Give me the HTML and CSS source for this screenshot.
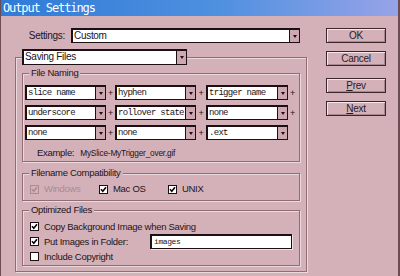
FILE: index.html
```html
<!DOCTYPE html>
<html lang="en">
<head>
  <meta charset="UTF-8">
  <title>Output Settings</title>
  <link rel="stylesheet" href="styles.css">
</head>
<body>
  <div class="window">
    <div class="titlebar">Output Settings</div>
    <div class="content">
      <div class="main">
        <div class="settings-row">
          <label>Settings:</label>
          <div class="select wide"><span class="val">Custom</span><span class="arrow"></span></div>
        </div>

        <fieldset class="panel">
          <legend><div class="select saving"><span class="val">Saving Files</span><span class="arrow"></span></div></legend>

          <fieldset class="group naming">
            <legend>File Naming</legend>
            <div class="name-grid">
              <div class="select mono"><span class="val">slice name</span><span class="arrow"></span></div>
              <span class="plus">+</span>
              <div class="select mono"><span class="val">hyphen</span><span class="arrow"></span></div>
              <span class="plus">+</span>
              <div class="select mono"><span class="val">trigger name</span><span class="arrow"></span></div>
              <span class="plus">+</span>

              <div class="select mono"><span class="val">underscore</span><span class="arrow"></span></div>
              <span class="plus">+</span>
              <div class="select mono"><span class="val">rollover state</span><span class="arrow"></span></div>
              <span class="plus">+</span>
              <div class="select mono"><span class="val">none</span><span class="arrow"></span></div>
              <span class="plus">+</span>

              <div class="select mono"><span class="val">none</span><span class="arrow"></span></div>
              <span class="plus">+</span>
              <div class="select mono"><span class="val">none</span><span class="arrow"></span></div>
              <span class="plus">+</span>
              <div class="select mono"><span class="val">.ext</span><span class="arrow"></span></div>
              <span></span>
            </div>
            <div class="example">
              <span>Example:</span>
              <span class="example-file">MySlice-MyTrigger_over.gif</span>
            </div>
          </fieldset>

          <fieldset class="group compat">
            <legend>Filename Compatibility</legend>
            <div class="checks">
              <div class="check disabled">
                <span class="cb"><svg viewBox="0 0 7 7"><path d="M1 3.2 L2.8 5.2 L6 1.2" /></svg></span>Windows
              </div>
              <div class="check">
                <span class="cb"><svg viewBox="0 0 7 7"><path d="M1 3.2 L2.8 5.2 L6 1.2" /></svg></span>Mac OS
              </div>
              <div class="check">
                <span class="cb"><svg viewBox="0 0 7 7"><path d="M1 3.2 L2.8 5.2 L6 1.2" /></svg></span>UNIX
              </div>
            </div>
          </fieldset>

          <fieldset class="group optimized">
            <legend>Optimized Files</legend>
            <div class="opt-row">
              <span class="cb"><svg viewBox="0 0 7 7"><path d="M1 3.2 L2.8 5.2 L6 1.2" /></svg></span>Copy Background Image when Saving
            </div>
            <div class="opt-row">
              <span class="cb"><svg viewBox="0 0 7 7"><path d="M1 3.2 L2.8 5.2 L6 1.2" /></svg></span>Put Images in Folder:
              <div class="textbox">images</div>
            </div>
            <div class="opt-row">
              <span class="cb"></span>Include Copyright
            </div>
          </fieldset>
        </fieldset>
      </div>

      <div class="buttons">
        <button class="btn">OK</button>
        <button class="btn cancel">Cancel</button>
        <button class="btn prev"><u>P</u>rev</button>
        <button class="btn next"><u>N</u>ext</button>
      </div>
    </div>
  </div>
</body>
</html>
```

FILE: styles.css
```css
* {
  box-sizing: border-box;
}

body {
  margin: 0;
  font-family: "Liberation Sans", Arial, sans-serif;
  font-size: 9.5px;
  letter-spacing: -0.3px;
  color: #231418;
}

.window {
  width: 400px;
  height: 276px;
  background: #d4b1b9;
  border-left: 1px solid #6b4c54;
  border-right: 2px solid #6b4c54;
  overflow: hidden;
}

.titlebar {
  height: 16px;
  background: linear-gradient(90deg, #2f7bd7, #4f90df 55%, #97a3e8);
  color: white;
  font-family: "DejaVu Sans Mono", monospace;
  font-size: 12px;
  letter-spacing: -1.1px;
  line-height: 16px;
  padding-left: 2px;
}

.content {
  display: flex;
}

.main {
  width: 292px;
  margin-left: 14px;
}

/* settings row */
.settings-row {
  margin-top: 12px;
  padding-right: 7px;
  display: flex;
  align-items: center;
  justify-content: flex-end;
  gap: 6px;
  font-size: 10px;
}

/* fake dropdowns */
.select {
  display: flex;
  height: 15px;
  background: white;
  border: 1px solid #1d1014;
  border-top-width: 2px;
  border-left-width: 2px;
}

.select .val {
  flex: 1;
  padding-left: 1px;
  line-height: 12px;
  white-space: nowrap;
  overflow: hidden;
}

.select .arrow {
  width: 10px;
  background: #cda8b1;
  border-left: 1px solid #1d1014;
  display: flex;
  align-items: center;
  justify-content: center;
}

.select .arrow::after {
  content: "";
  border-left: 2px solid transparent;
  border-right: 2px solid transparent;
  border-top: 3px solid #1d1014;
}

.select.wide {
  width: 229px;
}

.select.saving {
  width: 165px;
  height: 16px;
  font-size: 10px;
}

.select.mono .val {
  font-family: "Liberation Mono", monospace;
  font-size: 9px;
  letter-spacing: -0.7px;
}

/* group boxes */
fieldset {
  margin: 0;
  min-inline-size: 0;
  border: 1px solid #8e6d75;
  box-shadow: inset 1px 1px 0 #ecd9dd, 1px 1px 0 #ecd9dd;
}

.panel {
  margin-top: 6px;
  padding: 0 6px 5px;
}

.panel > legend {
  padding: 0;
}

.group {
  padding: 0;
}

.group legend {
  margin-left: 6px;
  padding: 0 2px;
  background: #d4b1b9;
  line-height: 12px;
}

.naming {
  margin-top: 2px;
  padding-bottom: 2px;
}

.name-grid {
  display: grid;
  grid-template-columns: 81px 9px 81px 10px 82px 9px;
  grid-auto-rows: 15px;
  row-gap: 5px;
  margin: 6px 0 0 2px;
}

.plus {
  text-align: center;
  font-size: 9px;
  line-height: 17px;
}

.example {
  display: flex;
  align-items: baseline;
  gap: 6px;
  margin: 7px 0 0 14px;
  line-height: 12px;
}

.example-file {
  font-size: 8.3px;
  letter-spacing: -0.2px;
}

.compat {
  margin-top: 5px;
  padding-bottom: 5px;
}

.checks {
  display: flex;
  margin-top: 4px;
  padding-left: 7px;
}

.check {
  width: 69px;
  display: flex;
  align-items: center;
  gap: 5px;
  line-height: 12px;
}

.check.disabled {
  color: #a88b93;
}

.cb {
  width: 9px;
  height: 9px;
  background: white;
  border: 1px solid #1d1014;
  display: flex;
  flex-shrink: 0;
}

.cb svg {
  width: 7px;
  height: 7px;
}

.cb path {
  fill: none;
  stroke: #0d0508;
  stroke-width: 1.6;
}

.disabled .cb {
  background: #d4b1b9;
  border-color: #a88b93;
}

.disabled .cb path {
  stroke: #a88b93;
}

.optimized {
  margin-top: 3px;
  padding-bottom: 1px;
}

.opt-row {
  display: flex;
  align-items: center;
  gap: 5px;
  height: 15px;
  padding-left: 7px;
}

.opt-row:first-of-type {
  margin-top: 3px;
}

.textbox {
  width: 142px;
  height: 15px;
  margin: 0 7px 0 auto;
  background: white;
  border: 1px solid #1d1014;
  border-top-width: 2px;
  border-left-width: 2px;
  box-shadow: 1px 1px 0 #f0e0e4;
  font-family: "Liberation Mono", monospace;
  font-size: 8px;
  letter-spacing: -0.4px;
  line-height: 12px;
  padding-left: 2px;
}

/* buttons */
.buttons {
  width: 60px;
  margin: 12px 0 0 19px;
  display: flex;
  flex-direction: column;
}

.btn {
  height: 15px;
  padding: 0;
  background: transparent;
  border: 1px solid #3b262c;
  box-shadow: inset 1px 1px 0 #f4e6e9, inset -1px -1px 0 #a88890;
  font-family: "Liberation Sans", Arial, sans-serif;
  font-size: 10px;
  letter-spacing: -0.3px;
  line-height: 12px;
  color: #2a1a1e;
}

.btn.cancel {
  margin-top: 8px;
}

.btn.prev {
  margin-top: 12px;
}

.btn.next {
  margin-top: 8px;
}
```
